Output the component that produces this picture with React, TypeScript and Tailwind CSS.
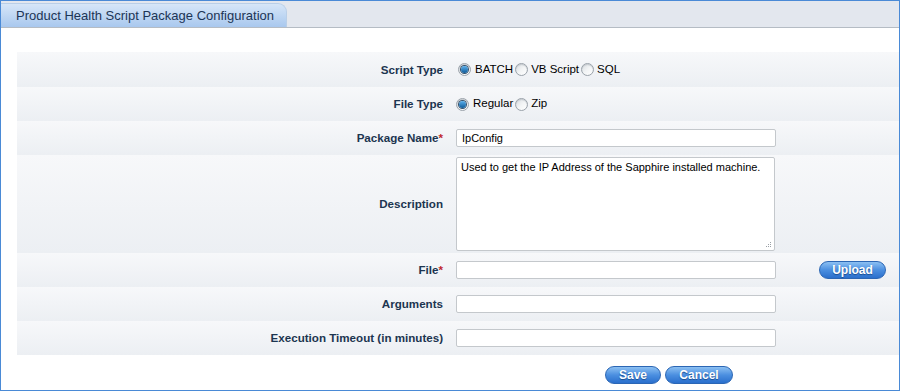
import React from "react";

const font = { fontFamily: '"Liberation Sans", Arial, sans-serif' };

function Radio({ checked }: { checked?: boolean }) {
  return (
    <span className="inline-flex h-[13px] w-[13px] items-center justify-center rounded-full border border-[#9aa2aa] bg-gradient-to-br from-[#d9dde1] via-[#f2f4f5] to-[#ffffff] shadow-[inset_0_1px_1px_#c4c9ce]">
      {checked ? (
        <span className="h-[7px] w-[7px] rounded-full bg-gradient-to-b from-[#5cb2ee] to-[#0a5a98] shadow-[0_0_0_1px_#34506c]" />
      ) : null}
    </span>
  );
}

function Row({
  label,
  req,
  h,
  children,
  right,
}: {
  label: string;
  req?: boolean;
  h: string;
  children: React.ReactNode;
  right?: React.ReactNode;
}) {
  return (
    <div className={`flex items-center bg-gradient-to-b from-[#f7f8fa] to-[#eceff3] ${h}`}>
      <div className="w-[439px] pr-[13px] text-right text-[11.6px] font-bold text-[#1c3550]">
        {label}
        {req ? <span className="text-[#c0262d]">*</span> : null}
      </div>
      <div className="flex w-[320px] items-center">{children}</div>
      {right}
    </div>
  );
}

function Input({ value }: { value?: string }) {
  return (
    <div className="flex h-[18px] w-[320px] items-center rounded-[2px] border border-[#c4c8cc] bg-white px-[5px] text-[11px] text-black">
      {value}
    </div>
  );
}

function Btn({ children, w }: { children: React.ReactNode; w: string }) {
  return (
    <div
      className={`flex h-[18px] ${w} items-center justify-center rounded-full border border-[#2b66b4] bg-gradient-to-b from-[#8cc0f2] via-[#4b8fe0] to-[#2a6fcc] text-[12px] font-bold text-white [text-shadow:0_1px_1px_#1b4d8f]`}
    >
      {children}
    </div>
  );
}

export default function App() {
  return (
    <div style={font} className="h-[391px] w-[900px] overflow-hidden border border-[#4a8ad6] bg-white">
      <div className="flex h-[27px] items-end border-b border-[#b5bcc4] bg-[#e3e7ee]">
        <div className="flex h-[24px] w-[286px] items-center rounded-tr-[9px] border-r border-t border-[#b9cfe8] bg-gradient-to-b from-[#d6e6f8] to-[#a9c8ee] pl-[15px] text-[13px] text-[#1c3556]">
          Product Health Script Package Configuration
        </div>
      </div>
      <div className="ml-[16px] mt-[24px]">
        <Row label="Script Type" h="h-[35px]">
          <div className="flex items-center pl-[2px] text-[11.5px] text-black">
            <Radio checked />
            <span className="ml-[4px]">BATCH</span>
            <span className="ml-[2px] flex"><Radio /></span>
            <span className="ml-[3px]">VB Script</span>
            <span className="ml-[2px] flex"><Radio /></span>
            <span className="ml-[3px]">SQL</span>
          </div>
        </Row>
        <Row label="File Type" h="h-[34px]">
          <div className="flex items-center text-[11.5px] text-black">
            <Radio checked />
            <span className="ml-[4px]">Regular</span>
            <span className="ml-[2px] flex"><Radio /></span>
            <span className="ml-[3px]">Zip</span>
          </div>
        </Row>
        <Row label="Package Name" req h="h-[34px]">
          <Input value="IpConfig" />
        </Row>
        <Row label="Description" h="h-[98px]">
          <div className="relative h-[94px] w-[319px] rounded-[2px] border border-[#c4c8cc] bg-white px-[4px] pt-[3px] text-[11px] leading-[13px] text-black">
            Used to get the IP Address of the Sapphire installed machine.
            <svg className="absolute bottom-[2px] right-[2px]" width="7" height="7" viewBox="0 0 7 7">
              <rect x="5" y="1" width="1" height="1" fill="#9aa0a6" />
              <rect x="3" y="3" width="1" height="1" fill="#9aa0a6" />
              <rect x="5" y="3" width="1" height="1" fill="#9aa0a6" />
              <rect x="1" y="5" width="1" height="1" fill="#9aa0a6" />
              <rect x="3" y="5" width="1" height="1" fill="#9aa0a6" />
              <rect x="5" y="5" width="1" height="1" fill="#9aa0a6" />
            </svg>
          </div>
        </Row>
        <Row
          label="File"
          req
          h="h-[34px]"
          right={
            <div className="ml-[43px]">
              <Btn w="w-[67px]">Upload</Btn>
            </div>
          }
        >
          <Input />
        </Row>
        <Row label="Arguments" h="h-[34px]">
          <Input />
        </Row>
        <Row label="Execution Timeout (in minutes)" h="h-[34px]">
          <Input />
        </Row>
      </div>
      <div className="ml-[604px] mt-[11px] flex gap-[4px]">
        <Btn w="w-[56px]">Save</Btn>
        <Btn w="w-[68px]">Cancel</Btn>
      </div>
    </div>
  );
}
